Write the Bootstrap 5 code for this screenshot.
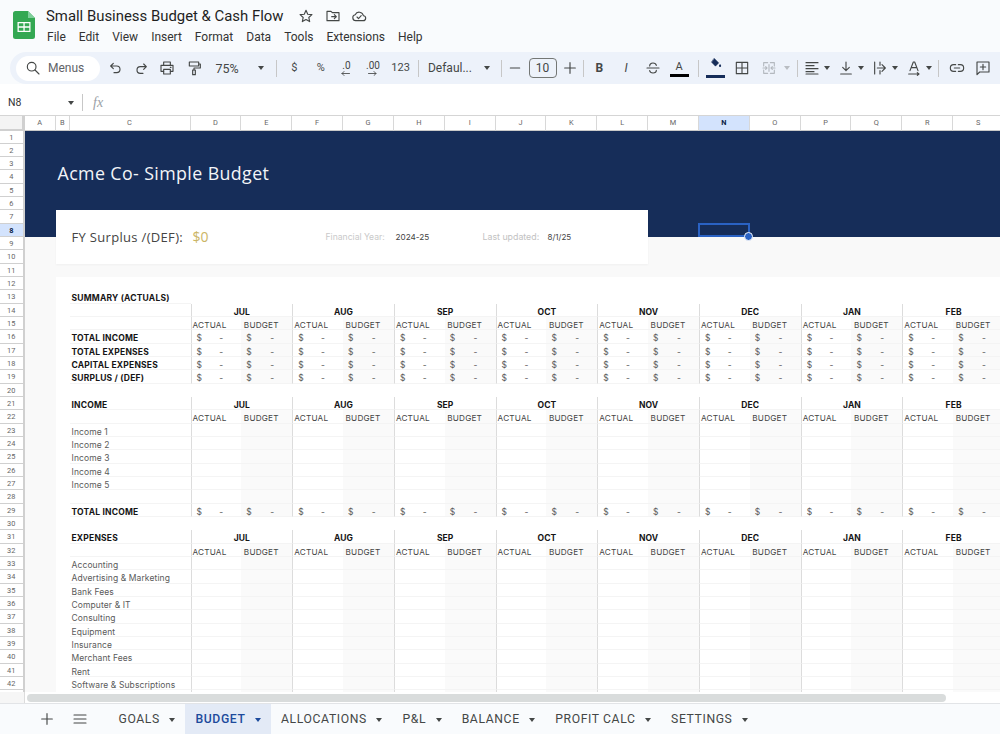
<!DOCTYPE html>
<html lang="en"><head><meta charset="utf-8"><title>Small Business Budget & Cash Flow</title>
<link href="https://cdn.jsdelivr.net/npm/bootstrap@5.3.0/dist/css/bootstrap.min.css" rel="stylesheet">
<style>
html,body{height:734px;overflow:hidden;background:#f9fbfd;font-family:Roboto,"Liberation Sans",sans-serif}
svg{display:block}
.ic{fill:none;stroke:#444746;stroke-width:1.7;stroke-linecap:round;stroke-linejoin:round}
.apphead{height:52px;padding-left:13px;background:#f9fbfd}
.logo{margin-top:11px;width:22px;height:28px;flex:none}
.doc-title{font:400 14.9px/20px Roboto,sans-serif;color:#1f1f1f;margin:6px 0 0 11px;height:20px;white-space:nowrap}
.title-icons{margin-left:15px;margin-top:8px;gap:10.5px}
.title-icons svg{width:16px;height:16px}
.menubar{margin:1px 0 0 5.5px}
.menubar a{font:400 12px/18px Roboto,sans-serif;color:#333;padding:1px 6.5px;text-decoration:none}
.tbar{height:32px;margin-left:10px;padding-left:6px;background:#edf2fa;border-radius:16px 0 0 16px}
.searchpill{width:84px;height:25px;background:#fff;border-radius:13px;margin-right:1px;font:400 12px Roboto,sans-serif;color:#5f6368;padding-left:9px;gap:7px}
.tb{width:26.6px;height:24px;padding:0;border:0;flex:none;color:#444746;font:400 11px/24px Roboto,sans-serif}
.tb svg{width:16px;height:16px;margin:auto}
.tgl{width:20px;height:24px;padding:0;border:0;flex:none}
.tgl svg{width:16px;height:16px;margin:auto}
.vsep{width:1px;height:17px;background:#c7c7c7;flex:none}
.caret{width:0;height:0;border:3.5px solid transparent;border-top:4px solid #444746;border-bottom:0;flex:none}
.caretbox{width:10px;flex:none;justify-content:center}
.caret.dim{border-top-color:#b9bdc2}
.zoombox{width:64.6px;font:400 12.5px Roboto,sans-serif;color:#444746;padding-left:8px;padding-right:8px;flex:none}
.fontbox{width:78px;font:400 12px Roboto,sans-serif;color:#444746;padding-left:5px;padding-right:11px;flex:none}
.sizebox{width:28px;height:20px;border:1px solid #747775;border-radius:4px;font:400 12px/18px Roboto,sans-serif;color:#444746;text-align:center;flex:none}
.mini{font:400 10px/9px Roboto,sans-serif;color:#444746;margin-right:2px;align-self:center}
.arr{width:9px!important;height:5px!important;margin:1px 0 0 7px!important}
.letter{font-size:12px;font-family:Roboto,sans-serif;color:#444746;line-height:24px}
.colorA{line-height:13px;font-size:11px;width:20px;margin:auto;padding-bottom:1px}
.colorbar{height:3px;background:#000;width:19px;margin:0 auto}
.colorbar.navy{background:#162d59}
.bucket{height:13px!important;stroke-width:1}
.dimic{stroke:#b4b9bf}
.fbar{height:31px;background:#fff;font:400 10.5px Roboto,sans-serif;color:#333;padding-top:6px}
.namebox{width:74px;padding:0 0 0 8px}
.fx{font:italic 400 14px "Liberation Serif",serif;color:#9aa0a6;margin-left:10px}
.sheet{display:grid;grid-template-columns:24.5px 31.5px 13.5px 121px repeat(16,50.85px);grid-template-rows:14.5px repeat(43,13.33px);height:577px;overflow:hidden;background:#f9f9f9;font-family:Inter,"Liberation Sans",sans-serif;border-top:1px solid #d5d5d5;width:1000px}
.hcell{background:#fff;color:#666;font:400 7.4px/14px Roboto,sans-serif;text-align:center;border-right:1px solid #d8d8d8;border-bottom:1px solid #c9c9c9;min-width:0;overflow:hidden}
.hrow{border-right:2px solid #d0d0d0;border-bottom:1px solid #d0d0d0;line-height:14px;background:#fff}
.hcorner{border-right:3px solid #d0d0d0;border-bottom:2px solid #d0d0d0;background:#f4f4f4}
.hon{background:#d3e3fd;color:#0b1f46;font-weight:700}
.banner{grid-area:2/2/10/21;background:#162d59;color:#f3f5f8;font:400 17.8px/24px "Open Sans",sans-serif;padding:30px 0 0 33px;letter-spacing:.4px}
.summarybox{grid-area:8/3/12/14;background:#fff;box-shadow:0 1px 2px rgba(0,0,0,.04);padding-left:15.5px;color:#444;font:400 8px/1 Inter,sans-serif;z-index:1}
.fy{font:400 13px/1 "Open Sans",sans-serif;color:#444;letter-spacing:.32px;width:121px}
.fyval{font:400 14px/1 "Open Sans",sans-serif;color:#cbb565;width:133px}
.lbl{color:#c9c9c9;width:70px;font-size:8.6px}
.val{width:87px;font-size:8.2px}
.lbl2{color:#c2c2c2;width:65px;font-size:8.8px}
.panel{grid-area:13/3/46/21;background:#fff}
.sc{font:400 8.5px/16px Inter,sans-serif;color:#5a5a5a;border-bottom:1px solid #f4f4f4;white-space:nowrap;min-width:0;z-index:1;letter-spacing:.1px}
.sc.lab{padding-left:2px}
.sc.b{font-weight:700;color:#151515;font-size:8.5px;letter-spacing:.2px}
.sc.mon{font-weight:700;color:#151515;text-align:center;font-size:8.5px}
.sc.sub{padding-left:2.5px;color:#444;font-size:8.2px;letter-spacing:.2px}
.sc.sub.ml{padding-left:1px}
.sc.ml{border-left:1px solid #dcdcdc}
.sc.shade{background:#fafafa}
.sc.money{padding:0 18px 0 5px}
.sel{grid-area:9/15/10/16;border:2px solid #2a62c4;z-index:3;position:relative;margin:-1px 0 0 -1px}
.handle{position:absolute;right:-5.5px;bottom:-5.5px;width:9px;height:9px;border-radius:50%;background:#2a62c4;border:1px solid #f2f5fb}
.hscroll{height:11px;background:#fff;padding-left:27px}
.hscroll-l{width:25px;margin-left:-27px;margin-right:2px;background:#f6f6f6;border-right:1px solid #dcdcdc;height:11px}
.thumb{width:919px;height:8px;margin-top:1.5px;background:#d9dcdc;border-radius:4px}
.tabbar{height:31px;background:#f9fbfd;border-top:1px solid #e2e4e7;flex:1;padding-left:30px}
.tabtool{width:33px;flex:none}
.tabtool svg{width:16px;height:16px;margin:auto}
.tabs{margin-left:12px}
.tabs .nav-link{padding:1px 8px 0 10.5px;height:30px;color:#444746;font:400 12.2px/29px Roboto,sans-serif;letter-spacing:.62px;gap:8px}
.tabs .nav-link.active{background:#e3eaf6;color:#1c4a9c;font-weight:500}
.tabs .caret{margin:0 1.5px}
.tabs .active .caret{border-top-color:#1c4a9c}
.rgap{margin-right:2px}
.lgap{margin-left:5px;margin-right:4px}
.mgap{margin-left:5px;margin-right:4px}
</style></head>
<body class="d-flex flex-column">
<svg width="0" height="0" class="position-absolute"><defs>
<symbol id="i-search" viewBox="0 0 24 24"><circle cx="10" cy="10" r="6.5"/><path d="M15 15l6 6"/></symbol>
<symbol id="i-undo" viewBox="0 0 24 24"><path d="M11 13 7 9l4-4M7 9h9a5 5 0 0 1 0 10h-4"/></symbol>
<symbol id="i-redo" viewBox="0 0 24 24"><path d="M16 14l4-4-4-4M20 10h-9a5 5 0 0 0 0 10h4"/></symbol>
<symbol id="i-print" viewBox="0 0 24 24"><path d="M7 8V3h10v5M7 17H3V8h18v9h-4"/><path d="M7 14h10v7H7zM17 11h1"/></symbol>
<symbol id="i-paint" viewBox="0 0 24 24"><path d="M5 3h14v6H5zM19 6h2.500v6H12v3"/><path d="M10 15h4v7h-4z"/></symbol>
<symbol id="i-star" viewBox="0 0 24 24"><path d="M12 3.500l2.600 5.800 6.300.7-4.700 4.200 1.300 6.200L12 17.200l-5.500 3.200 1.300-6.200L3.100 10l6.300-.7z"/></symbol>
<symbol id="i-folder" viewBox="0 0 24 24"><path d="M3 5h6l2 2h10v12H3zM10 13h7M14 10l3 3-3 3"/></symbol>
<symbol id="i-cloud" viewBox="0 0 24 24"><path d="M7 19a4.500 4.500 0 0 1-.7-8.900 6.500 6.500 0 0 1 12.300 1.500A3.700 3.700 0 0 1 18 19zM9 13.500l2.300 2.300 4-4.300"/></symbol>
<symbol id="i-strike" viewBox="0 0 24 24"><path d="M3 12h18M7 9c0-3 2.500-4.500 5-4.500s4.500 1.200 5 3.500M7 16c.5 2.500 2.500 3.500 5 3.500s5-1.500 5-4"/></symbol>
<symbol id="i-bucket" viewBox="0 0 24 24"><path d="M9 1l8 8-6 6-7-7z" fill="#162d59" stroke="#162d59"/><path d="M19.500 11c1 1.500 2 2.600 2 3.800a2 2 0 0 1-4 0c0-1.200 1-2.300 2-3.800z" fill="#162d59" stroke="none"/></symbol>
<symbol id="i-border" viewBox="0 0 24 24"><path d="M3.500 3.500h17v17h-17zM12 3.500v17M3.500 12h17"/></symbol>
<symbol id="i-merge" viewBox="0 0 24 24"><path d="M4 9V4h6M14 4h6v5M4 15v5h6M14 20h6v-5M3 12h6M7 10l2 2-2 2M21 12h-6M17 10l-2 2 2 2M12 7v10"/></symbol>
<symbol id="i-align" viewBox="0 0 24 24"><path d="M3 4h18M3 8.500h12M3 13h18M3 17.500h12M3 21h18"/></symbol>
<symbol id="i-valign" viewBox="0 0 24 24"><path d="M12 3v13M7 11l5 5 5-5M4 21h16"/></symbol>
<symbol id="i-wrap" viewBox="0 0 24 24"><path d="M4 3v18M8 12h12M15 7l5 5-5 5M12 3v5M12 16v5"/></symbol>
<symbol id="i-rotate" viewBox="0 0 24 24"><path d="M6 16 11 3h2l5 13M8 11.500h8M4 21h15M17 19l2.500 2-2.500 2"/></symbol>
<symbol id="i-link" viewBox="0 0 24 24"><path d="M10 7H7a5 5 0 0 0 0 10h3M14 7h3a5 5 0 0 1 0 10h-3M8 12h8"/></symbol>
<symbol id="i-comment" viewBox="0 0 24 24"><path d="M3 3h18v15H7l-4 4zM12 6.500v8M8 10.500h8"/></symbol>
<symbol id="i-plus" viewBox="0 0 24 24"><path d="M12 4v16M4 12h16"/></symbol>
<symbol id="i-minus" viewBox="0 0 24 24"><path d="M5 12h14"/></symbol>
<symbol id="i-menu" viewBox="0 0 24 24"><path d="M3 6h18M3 12h18M3 18h18"/></symbol>
<symbol id="i-left" viewBox="0 0 18 10"><path d="M17 5H2M6 1 2 5l4 4"/></symbol>
<symbol id="i-right" viewBox="0 0 18 10"><path d="M1 5h15M12 1l4 4-4 4"/></symbol>
</defs></svg>

<header class="apphead d-flex">
  <svg class="logo" viewBox="0 0 22 28"><path d="M2.500 0H15l7 7v18.500a2.500 2.500 0 0 1-2.500 2.500h-17A2.500 2.500 0 0 1 0 25.500v-23A2.500 2.500 0 0 1 2.500 0z" fill="#34a853"/><path d="M15 0l7 7h-7z" fill="#7fcf9b"/><path d="M4.500 11h13v10h-13z" fill="#fff"/><path d="M5.800 12.300h4.600v3H5.800zM11.700 12.300h4.600v3h-4.600zM5.800 16.700h4.600v3H5.800zM11.700 16.700h4.600v3h-4.600z" fill="#34a853"/></svg>
  <div>
    <div class="d-flex">
      <div class="doc-title">Small Business Budget &amp; Cash Flow</div>
      <div class="title-icons d-flex">
        <svg class="ic"><use href="#i-star"/></svg><svg class="ic"><use href="#i-folder"/></svg><svg class="ic"><use href="#i-cloud"/></svg>
      </div>
    </div>
    <nav class="menubar d-flex"><a href="#">File</a><a href="#">Edit</a><a href="#">View</a><a href="#">Insert</a><a href="#">Format</a><a href="#">Data</a><a href="#">Tools</a><a href="#">Extensions</a><a href="#">Help</a></nav>
  </div>
</header>

<div class="tbar d-flex align-items-center">
  <div class="searchpill d-flex align-items-center"><svg class="ic" width="16" height="16"><use href="#i-search"/></svg><span>Menus</span></div>
  <button class="btn tb"><svg class="ic"><use href="#i-undo"/></svg></button>
  <button class="btn tb"><svg class="ic"><use href="#i-redo"/></svg></button>
  <button class="btn tb"><svg class="ic"><use href="#i-print"/></svg></button>
  <button class="btn tb"><svg class="ic"><use href="#i-paint"/></svg></button>
  <div class="zoombox d-flex align-items-center justify-content-between"><span>75%</span><i class="caret"></i></div>
  <div class="vsep mx-1"></div>
  <button class="btn tb">$</button>
  <button class="btn tb">%</button>
  <button class="btn tb d-flex flex-column justify-content-center"><span class="mini">.0</span><svg class="ic arr"><use href="#i-left"/></svg></button>
  <button class="btn tb d-flex flex-column justify-content-center"><span class="mini">.00</span><svg class="ic arr"><use href="#i-right"/></svg></button>
  <button class="btn tb">123</button>
  <div class="vsep mx-1"></div>
  <div class="fontbox d-flex align-items-center justify-content-between"><span>Defaul...</span><i class="caret"></i></div>
  <div class="vsep"></div>
  <button class="btn tb"><svg class="ic"><use href="#i-minus"/></svg></button>
  <div class="sizebox">10</div>
  <button class="btn tb"><svg class="ic"><use href="#i-plus"/></svg></button>
  <div class="vsep rgap"></div>
  <button class="btn tb letter fw-bold">B</button>
  <button class="btn tb letter fst-italic">I</button>
  <button class="btn tb"><svg class="ic"><use href="#i-strike"/></svg></button>
  <button class="btn tb"><div class="colorA letter">A</div><div class="colorbar"></div></button>
  <div class="vsep lgap"></div>
  <button class="btn tb"><svg class="ic bucket"><use href="#i-bucket"/></svg><div class="colorbar navy mt-1"></div></button>
  <button class="btn tb"><svg class="ic"><use href="#i-border"/></svg></button>
  <button class="btn tb"><svg class="ic dimic"><use href="#i-merge"/></svg></button>
  <div class="caretbox d-flex"><i class="caret dim"></i></div>
  <div class="vsep mgap"></div>
  <div class="d-flex align-items-center gap-1">
    <div class="d-flex align-items-center"><button class="btn tgl"><svg class="ic"><use href="#i-align"/></svg></button><div class="caretbox d-flex"><i class="caret"></i></div></div>
    <div class="d-flex align-items-center"><button class="btn tgl"><svg class="ic"><use href="#i-valign"/></svg></button><div class="caretbox d-flex"><i class="caret"></i></div></div>
    <div class="d-flex align-items-center"><button class="btn tgl"><svg class="ic"><use href="#i-wrap"/></svg></button><div class="caretbox d-flex"><i class="caret"></i></div></div>
    <div class="d-flex align-items-center"><button class="btn tgl"><svg class="ic"><use href="#i-rotate"/></svg></button><div class="caretbox d-flex"><i class="caret"></i></div></div>
  </div>
  <div class="vsep ms-1 me-1"></div>
  <button class="btn tb"><svg class="ic"><use href="#i-link"/></svg></button>
  <button class="btn tb"><svg class="ic"><use href="#i-comment"/></svg></button>
</div>

<div class="fbar d-flex align-items-center">
  <div class="namebox d-flex align-items-center justify-content-between"><span>N8</span><i class="caret"></i></div>
  <div class="vsep ms-2"></div>
  <span class="fx">fx</span>
</div>

<main class="sheet" id="sheet">
  <div class="banner">Acme Co- Simple Budget</div>
  <div class="panel"></div>
  <div class="summarybox d-flex align-items-center">
    <span class="fy">FY Surplus /(DEF):</span><span class="fyval">$0</span>
    <span class="lbl">Financial Year:</span><span class="val">2024-25</span>
    <span class="lbl2">Last updated:</span><span>8/1/25</span>
  </div>
  <div class="sel"><div class="handle"></div></div>
</main>

<div class="hscroll d-flex"><div class="hscroll-l"></div><div class="thumb"></div></div>

<footer class="tabbar d-flex align-items-center">
  <div class="tabtool"><svg class="ic"><use href="#i-plus"/></svg></div>
  <div class="tabtool"><svg class="ic"><use href="#i-menu"/></svg></div>
  <ul class="nav tabs">
    <li class="nav-item"><a class="nav-link d-flex align-items-center" href="#">GOALS<i class="caret"></i></a></li>
    <li class="nav-item"><a class="nav-link active d-flex align-items-center" href="#">BUDGET<i class="caret"></i></a></li>
    <li class="nav-item"><a class="nav-link d-flex align-items-center" href="#">ALLOCATIONS<i class="caret"></i></a></li>
    <li class="nav-item"><a class="nav-link d-flex align-items-center" href="#">P&amp;L<i class="caret"></i></a></li>
    <li class="nav-item"><a class="nav-link d-flex align-items-center" href="#">BALANCE<i class="caret"></i></a></li>
    <li class="nav-item"><a class="nav-link d-flex align-items-center" href="#">PROFIT CALC<i class="caret"></i></a></li>
    <li class="nav-item"><a class="nav-link d-flex align-items-center" href="#">SETTINGS<i class="caret"></i></a></li>
  </ul>
</footer>

<script>
(function(){
  var s=document.getElementById('sheet');
  function add(cls,txt,row,col,rowEnd,colEnd){
    var d=document.createElement('div');d.className=cls;
    if(txt!==null&&txt!==undefined)d.textContent=txt;
    d.style.gridArea=row+'/'+col+'/'+(rowEnd||row+1)+'/'+(colEnd||col+1);
    s.appendChild(d);return d;
  }
  add('hcell hcorner','',1,1);
  'ABCDEFGHIJKLMNOPQRS'.split('').forEach(function(c,i){add('hcell'+(c==='N'?' hon':''),c,1,i+2);});
  for(var r=1;r<=43;r++)add('hcell hrow'+(r===8?' hon':''),r<43?r:'',r+1,1);
  var months=['JUL','AUG','SEP','OCT','NOV','DEC','JAN','FEB'];
  function grid(rowLine,kind){
    months.forEach(function(m,i){
      var c=5+i*2;
      ['ACTUAL','BUDGET'].forEach(function(n,j){
        var cls='sc'+(j===0?' ml':' shade');
        if(kind==='sub')add(cls+' sub',n,rowLine,c+j);
        else if(kind==='money'){
          var d=add(cls+' money d-flex justify-content-between','',rowLine,c+j);
          d.innerHTML='<span>$</span><span>-</span>';
        } else add(cls,'',rowLine,c+j);
      });
    });
  }
  function monthRow(rowLine){months.forEach(function(m,i){add('sc mon ml',m,rowLine,5+i*2,rowLine+1,7+i*2);});}
  function line(sheetRow,label,bold,kind){
    add('sc lab'+(bold?' b':''),label,sheetRow+1,4);
    grid(sheetRow+1,kind);
  }
  add('sc lab b','SUMMARY (ACTUALS)',14,4);
  add('sc lab','',15,4);monthRow(15);
  line(15,'',false,'sub');
  ['TOTAL INCOME','TOTAL EXPENSES','CAPITAL EXPENSES','SURPLUS / (DEF)'].forEach(function(t,i){line(16+i,t,true,'money');});
  add('sc lab b','INCOME',22,4);monthRow(22);
  line(22,'',false,'sub');
  ['Income 1','Income 2','Income 3','Income 4','Income 5',''].forEach(function(t,i){line(23+i,t,false,'blank');});
  line(29,'TOTAL INCOME',true,'money');
  add('sc lab b','EXPENSES',32,4);monthRow(32);
  line(32,'',false,'sub');
  ['Accounting','Advertising & Marketing','Bank Fees','Computer & IT','Consulting','Equipment','Insurance','Merchant Fees','Rent','Software & Subscriptions',''].forEach(function(t,i){line(33+i,t,false,'blank');});
})();
</script>
<script src="https://cdn.jsdelivr.net/npm/bootstrap@5.3.0/dist/js/bootstrap.bundle.min.js"></script>
</body></html>
